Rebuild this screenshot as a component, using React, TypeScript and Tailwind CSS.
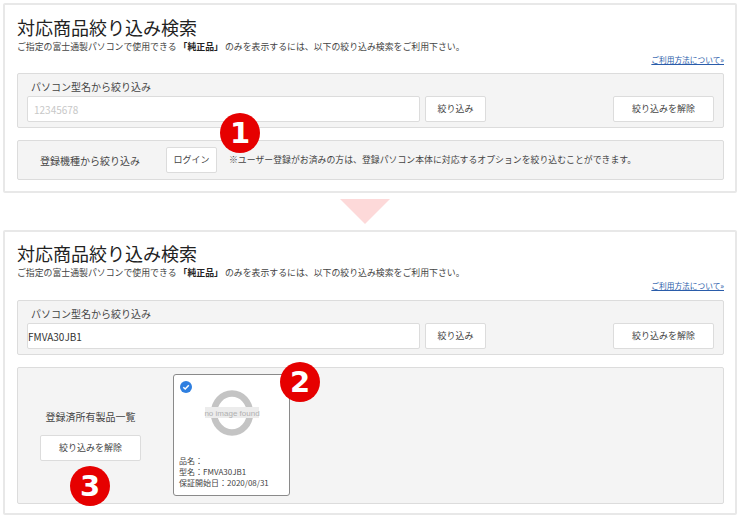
const FONT = "font-['Noto_Sans_CJK_JP','Noto_Sans',sans-serif]";

function Btn({ className, children }: { className: string; children: React.ReactNode }) {
  return (
    <div className={`flex items-center justify-center bg-white border border-[#dcdcdc] rounded-[2px] text-[9px] text-[#444] ${className}`}>
      {children}
    </div>
  );
}

function Badge({ n, className }: { n: number; className: string }) {
  return (
    <div className={`absolute w-10 h-10 rounded-full bg-[#e60000] text-white flex items-center justify-center text-[29px] font-bold font-['DejaVu_Sans',sans-serif] leading-none ${className}`}>
      {n}
    </div>
  );
}

function Heading() {
  return (
    <>
      <h1 className="text-[18px] leading-[28px] text-[#222] h-[27px]">対応商品絞り込み検索</h1>
      <p className="text-[8.9px] leading-[14px] text-[#444] whitespace-nowrap">
        ご指定の富士通製パソコンで使用できる<b className="font-bold text-[#222] mx-[2px]">「純正品」</b>のみを表示するには、以下の絞り込み検索をご利用下さい。
      </p>
      <div className="flex justify-end h-[12px]">
        <span className="text-[7.7px] leading-[12px] text-[#2a5caa] underline">ご利用方法について»</span>
      </div>
    </>
  );
}

function ModelPanel({ value, placeholder, className }: { value?: string; placeholder?: string; className: string }) {
  return (
    <div className={`h-[55px] bg-[#f4f4f4] border border-[#dcdcdc] rounded-[2px] pl-[9px] pr-[9px] pt-[5px] ${className}`}>
      <div className="text-[10px] leading-[16px] text-[#444] pl-[4px] h-[16px]">パソコン型名から絞り込み</div>
      <div className="flex mt-[1px] h-[26px]">
        <div className="w-[393px] bg-white border border-[#dcdcdc] rounded-[2px] flex items-center text-[10px]">
          {value ? <span className="text-[#333]">{value}</span> : <span className="text-[#c8c8c8] pl-[6px]">{placeholder}</span>}
        </div>
        <Btn className="w-[61px] ml-[5px]">絞り込み</Btn>
        <Btn className="w-[101px] ml-auto">絞り込みを解除</Btn>
      </div>
    </div>
  );
}

function NoImage() {
  return (
    <svg width="56" height="48" viewBox="0 0 56 48" className="block">
      <ellipse cx="28" cy="24" rx="18" ry="19.5" fill="none" stroke="#c4c4c4" strokeWidth="6.5" />
      <rect x="1" y="18" width="54" height="11" fill="#ececec" />
      <text x="28" y="27" textAnchor="middle" fontSize="8" fill="#b0b0b0" fontFamily="Liberation Sans, sans-serif">no image found</text>
    </svg>
  );
}

export default function App() {
  return (
    <div className={`relative w-[740px] h-[520px] bg-white pl-[3px] pt-[3px] ${FONT}`}>
      <section className="relative w-[734px] h-[190px] border-2 border-[#e8e8e8] rounded-[2px] pl-[12px] pr-[11px] pt-[8px]">
        <Heading />
        <ModelPanel placeholder="12345678" className="mt-[7px]" />
        <div className="mt-[12px] h-[40px] bg-[#f4f4f4] border border-[#dcdcdc] rounded-[2px] flex items-center">
          <span className="ml-[22px] w-[102px] text-[10px] text-[#444] whitespace-nowrap">登録機種から絞り込み</span>
          <Btn className="ml-[24px] w-[51px] h-[26px]">ログイン</Btn>
          <span className="ml-[12px] text-[8.9px] text-[#444] whitespace-nowrap">※ユーザー登録がお済みの方は、登録パソコン本体に対応するオプションを絞り込むことができます。</span>
        </div>
        <Badge n={1} className="left-[215px] top-[108px]" />
      </section>

      <div className="ml-[337px] mt-[6px] w-0 h-0 border-l-[25px] border-r-[25px] border-t-[25px] border-l-transparent border-r-transparent border-t-[#fdd9d9]" />

      <section className="relative mt-[6px] w-[734px] h-[285px] border-2 border-[#e8e8e8] rounded-[2px] pl-[12px] pr-[11px] pt-[7px]">
        <Heading />
        <ModelPanel value="FMVA30JB1" className="mt-[8px]" />
        <div className="mt-[12px] h-[137px] bg-[#f4f4f4] border border-[#dcdcdc] rounded-[2px] flex items-start pt-[6px]">
          <div className="w-[155px] pl-[22px] pt-[35px] flex flex-col">
            <div className="text-[10px] leading-[15px] text-[#444] text-center whitespace-nowrap w-[101px]">登録済所有製品一覧</div>
            <Btn className="mt-[11px] w-[101px] h-[26px]">絞り込みを解除</Btn>
          </div>
          <div className="relative w-[117px] h-[122px] bg-white border border-[#8a8a8a] rounded-[3px] flex flex-col">
            <div className="absolute left-[6px] top-[6px] w-[12px] h-[12px] rounded-full bg-[#2f7fe0] flex items-center justify-center">
              <svg width="8" height="8" viewBox="0 0 8 8"><path d="M1.3 4.2 3.2 6 6.8 2.2" fill="none" stroke="#fff" strokeWidth="1.5" /></svg>
            </div>
            <div className="flex justify-center pt-[14px] h-[80px]"><NoImage /></div>
            <div className="pl-[5px] text-[8px] leading-[11px] text-[#444]">
              <div>品名：</div>
              <div>型名：FMVA30JB1</div>
              <div>保証開始日：2020/08/31</div>
            </div>
          </div>
        </div>
        <Badge n={2} className="left-[275px] top-[130px]" />
        <Badge n={3} className="left-[65px] top-[234px]" />
      </section>
    </div>
  );
}
